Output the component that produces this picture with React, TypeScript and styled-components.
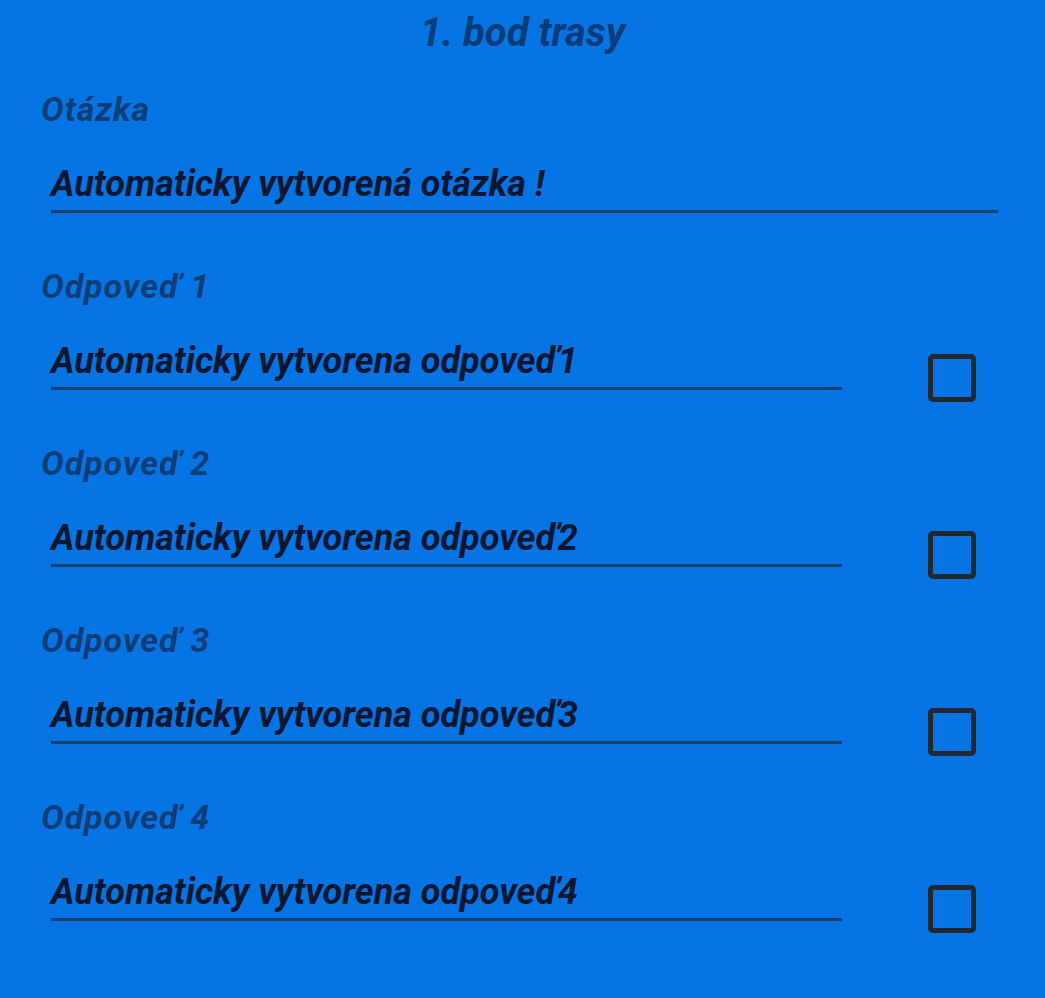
import React from "react";
import styled, { createGlobalStyle } from "styled-components";

const GlobalStyle = createGlobalStyle`
  html, body {
    margin: 0;
    padding: 0;
    background: #0774e3;
  }
  body {
    font-family: Roboto, "Noto Sans", sans-serif;
  }
`;

const Page = styled.div`
  width: 1045px;
  min-height: 998px;
  background: #0774e3;
  padding-top: 9px;
  box-sizing: border-box;
`;

const Title = styled.h1`
  margin: 0;
  text-align: center;
  font-size: 40px;
  line-height: 48px;
  font-weight: 700;
  font-style: italic;
  color: #0b3b78;
`;

const Form = styled.div`
  display: flex;
  flex-direction: column;
  gap: 53px;
  padding: 32px 0 0 41px;
`;

const Field = styled.div`
  display: flex;
  flex-direction: column;
  gap: 33px;
`;

const Label = styled.div`
  font-size: 34px;
  line-height: 40px;
  font-weight: 700;
  font-style: italic;
  letter-spacing: 0.9px;
  color: #0d3d77;
`;

const Row = styled.div`
  display: flex;
  align-items: flex-start;
  gap: 86px;
  padding-left: 10px;
`;

const Input = styled.div<{ $width: number }>`
  width: ${(p) => p.$width}px;
  font-size: 36px;
  line-height: 44px;
  font-weight: 700;
  font-style: italic;
  color: #0b1730;
  padding-bottom: 4px;
  border-bottom: 3px solid #123f6e;
  white-space: nowrap;
`;

const Check = styled.div`
  width: 48px;
  height: 48px;
  box-sizing: border-box;
  border: 5px solid #23272e;
  border-radius: 5px;
  margin-top: 15px;
  margin-bottom: -12px;
`;

const answers = [1, 2, 3, 4];

export default function App() {
  return (
    <>
      <GlobalStyle />
      <Page>
        <Title>1. bod trasy</Title>
        <Form>
          <Field>
            <Label>Otázka</Label>
            <Row>
              <Input $width={947}>Automaticky vytvorená otázka !</Input>
            </Row>
          </Field>
          {answers.map((n) => (
            <Field key={n}>
              <Label>Odpoveď {n}</Label>
              <Row>
                <Input $width={791}>Automaticky vytvorena odpoveď{n}</Input>
                <Check />
              </Row>
            </Field>
          ))}
        </Form>
      </Page>
    </>
  );
}
